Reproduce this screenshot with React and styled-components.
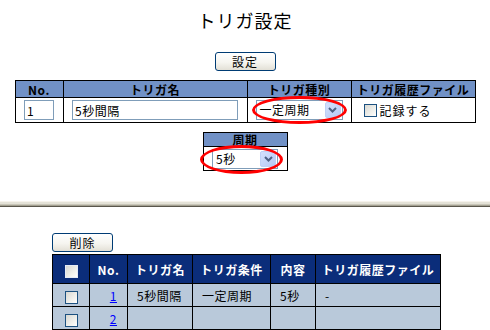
import React from 'react'
import styled, { createGlobalStyle } from 'styled-components'

const GlobalStyle = createGlobalStyle`
  html, body { margin: 0; padding: 0; background: #fff; overflow: hidden; }
  body {
    font-family: "Noto Sans CJK JP", "Liberation Sans", sans-serif;
    font-size: 12px;
    color: #000;
  }
`

const Page = styled.div`
  width: 490px;
  padding-top: 8px;
  box-sizing: border-box;
  display: flex;
  flex-direction: column;
  align-items: center;
  & > * { flex-shrink: 0; }
`

const Title = styled.h1`
  margin: 0;
  font-size: 18px;
  line-height: 24px;
  font-weight: normal;
  letter-spacing: 1px;
`

const XpButton = styled.button`
  width: 61px;
  height: 19px;
  margin-top: ${p => p.$mt || 0}px;
  padding: 0;
  border: 1px solid #003c74;
  border-radius: 3px;
  background: linear-gradient(#ffffff, #f6f5f0 55%, #e3e0d6);
  font: inherit;
  font-size: 12px;
  line-height: 15px;
  color: #000;
  letter-spacing: 1px;
`

const SettingTable = styled.table`
  border-collapse: collapse;
  table-layout: fixed;
  margin-top: ${p => p.$mt}px;
  width: ${p => p.$w}px;
  th, td {
    border: 1px solid #000;
    padding: 0;
    white-space: nowrap;
  }
  th {
    background: #7191c6;
    height: ${p => p.$headH}px;
    font-size: 12px;
    line-height: 13px;
    font-weight: bold;
    letter-spacing: 0.5px;
  }
  td {
    height: ${p => p.$rowH}px;
    text-align: center;
  }
`

const TextField = styled.input`
  box-sizing: border-box;
  width: ${p => p.$w}px;
  height: 20px;
  border: 1px solid #7f9db9;
  padding: 0 2px;
  font: inherit;
  font-size: 12px;
  letter-spacing: 0.5px;
  display: block;
  margin: 0 auto;
  outline: none;
`

const SelectWrap = styled.div`
  position: relative;
  width: ${p => p.$w}px;
  margin: 0 auto;
`

const SelectBox = styled.div`
  box-sizing: border-box;
  height: 20px;
  border: 1px solid #7f9db9;
  background: #fff;
  display: flex;
  align-items: center;
  padding: 0 1px 0 3px;
`

const SelectText = styled.span`
  flex: 1;
  text-align: left;
  font-size: 12px;
  line-height: 16px;
  letter-spacing: 0.5px;
`

const ArrowButton = styled.span`
  width: 16px;
  height: 16px;
  border-radius: 2px;
  background: linear-gradient(135deg, #d4e0fc, #b5c9f6);
  border: 1px solid #bed0f6;
  box-sizing: border-box;
  display: flex;
  align-items: center;
  justify-content: center;
`

const RedEllipse = styled.span`
  position: absolute;
  left: ${p => p.$l}px;
  right: ${p => p.$r}px;
  top: ${p => p.$t}px;
  bottom: ${p => p.$b}px;
  border: 3px solid #f00;
  border-radius: 50%;
  pointer-events: none;
`

const CheckBox = styled.span`
  display: inline-block;
  box-sizing: border-box;
  width: 13px;
  height: 13px;
  border: 1px solid ${p => (p.$light ? '#e6ebf5' : '#1c5180')};
  background: linear-gradient(135deg, #d8d8d2, #f4f4f0 70%, #ffffff);
  vertical-align: middle;
`

const CheckLabel = styled.label`
  display: flex;
  align-items: center;
  gap: 3px;
  padding-left: 12px;
  font-size: 12px;
  letter-spacing: 1px;
`

const Separator = styled.div`
  align-self: stretch;
  margin-top: 30px;
  height: 6px;
  background: linear-gradient(
    #f6f3ec 0, #f6f3ec 1px,
    #e4e2d7 1px, #e4e2d7 3px,
    #c9c7b9 3px, #c9c7b9 4px,
    #a3a091 4px, #a3a091 5px,
    #5a574c 5px, #5a574c 6px
  );
`

const ListSection = styled.div`
  align-self: stretch;
  padding-left: 52px;
  margin-top: 24px;
`

const ListTable = styled.table`
  border-collapse: collapse;
  table-layout: fixed;
  margin-top: 2px;
  width: 389px;
  th, td {
    border: 1px solid #000;
    padding: 0 0 0 9px;
    font-size: 12px;
    letter-spacing: 0.5px;
    white-space: nowrap;
    overflow: hidden;
  }
  th {
    background: #0b2d7a;
    color: #fff;
    height: 28px;
    padding: 0;
    font-weight: bold;
    text-align: center;
  }
  td {
    background: #b9c9da;
    height: 22px;
    text-align: left;
  }
`

const CheckCell = styled.td`
  && { text-align: center; padding: 0; }
`

const NoCell = styled.td`
  && { text-align: right; padding: 0 10px 0 0; }
`

const NoLink = styled.a`
  color: #00f;
  text-decoration: underline;
`

function Chevron() {
  return (
    <svg width="9" height="6" viewBox="0 0 9 6">
      <path d="M1 1 L4.5 4.5 L8 1" fill="none" stroke="#4d6185" strokeWidth="2" />
    </svg>
  )
}

function FakeSelect({ value, width, ring }) {
  return (
    <SelectWrap $w={width}>
      <SelectBox>
        <SelectText>{value}</SelectText>
        <ArrowButton><Chevron /></ArrowButton>
      </SelectBox>
      <RedEllipse $l={ring[0]} $r={ring[1]} $t={ring[2]} $b={ring[3]} />
    </SelectWrap>
  )
}

const triggers = [
  { no: 1, name: '5秒間隔', cond: '一定周期', detail: '5秒', file: '-' },
  { no: 2, name: '', cond: '', detail: '', file: '' },
]

export default function App() {
  return (
    <Page>
      <GlobalStyle />
      <Title>トリガ設定</Title>
      <XpButton $mt={20}>設定</XpButton>

      <SettingTable $mt={9} $w={460} $headH={16} $rowH={24}>
        <colgroup>
          <col style={{ width: 48 }} />
          <col style={{ width: 184 }} />
          <col style={{ width: 104 }} />
          <col style={{ width: 124 }} />
        </colgroup>
        <thead>
          <tr>
            <th>No.</th>
            <th>トリガ名</th>
            <th>トリガ種別</th>
            <th>トリガ履歴ファイル</th>
          </tr>
        </thead>
        <tbody>
          <tr>
            <td><TextField $w={30} defaultValue="1" /></td>
            <td><TextField $w={166} defaultValue="5秒間隔" /></td>
            <td><FakeSelect value="一定周期" width={87} ring={[-4, -4, -4, -4]} /></td>
            <td>
              <CheckLabel><CheckBox />記録する</CheckLabel>
            </td>
          </tr>
        </tbody>
      </SettingTable>

      <SettingTable $mt={9} $w={85} $headH={13} $rowH={23}>
        <thead>
          <tr><th>周期</th></tr>
        </thead>
        <tbody>
          <tr>
            <td><FakeSelect value="5秒" width={66} ring={[-12, -5, -4, -5]} /></td>
          </tr>
        </tbody>
      </SettingTable>

      <Separator />

      <ListSection>
        <XpButton $mt={2}>削除</XpButton>
        <ListTable>
          <colgroup>
            <col style={{ width: 37 }} />
            <col style={{ width: 38 }} />
            <col style={{ width: 65 }} />
            <col style={{ width: 78 }} />
            <col style={{ width: 45 }} />
            <col style={{ width: 125 }} />
          </colgroup>
          <thead>
            <tr>
              <th><CheckBox $light /></th>
              <th>No.</th>
              <th>トリガ名</th>
              <th>トリガ条件</th>
              <th>内容</th>
              <th>トリガ履歴ファイル</th>
            </tr>
          </thead>
          <tbody>
            {triggers.map(t => (
              <tr key={t.no}>
                <CheckCell><CheckBox /></CheckCell>
                <NoCell><NoLink href="#">{t.no}</NoLink></NoCell>
                <td>{t.name}</td>
                <td>{t.cond}</td>
                <td>{t.detail}</td>
                <td>{t.file}</td>
              </tr>
            ))}
          </tbody>
        </ListTable>
      </ListSection>
    </Page>
  )
}
